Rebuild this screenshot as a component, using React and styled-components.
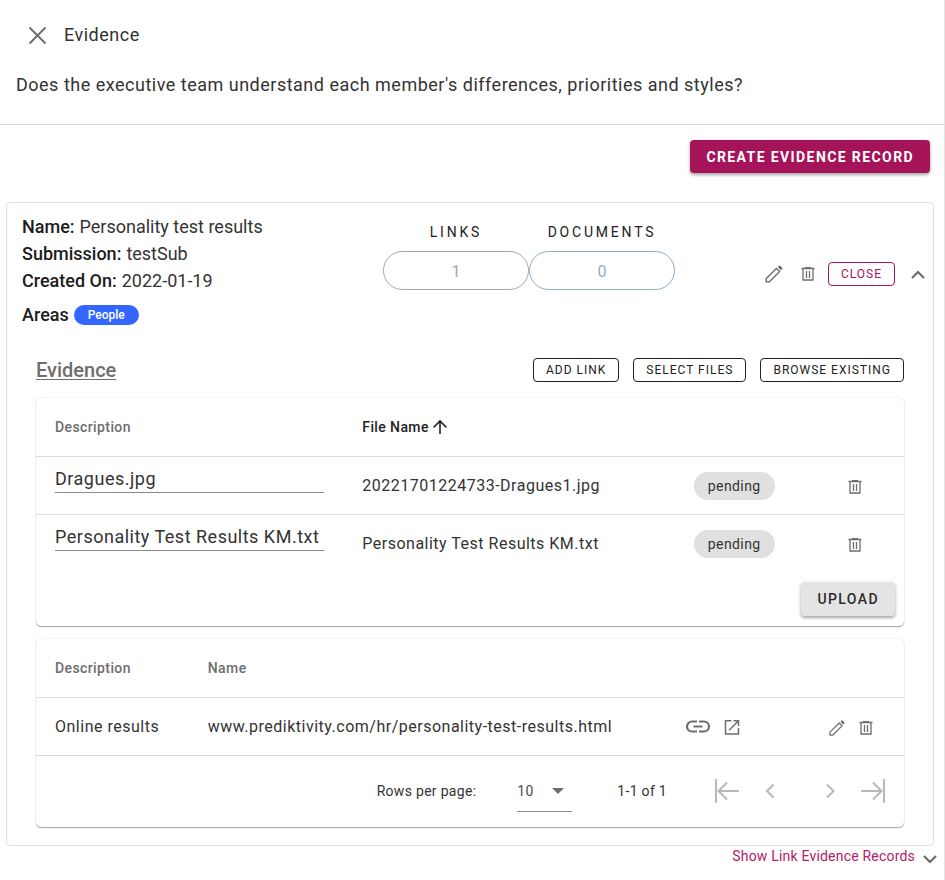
import React, { useState } from "react";
import styled, { createGlobalStyle, css } from "styled-components";

const GlobalStyle = createGlobalStyle`
  *, *::before, *::after { box-sizing: border-box; }
  body {
    margin: 0;
    background: #fff;
    color: #333;
    font-family: Roboto, "Liberation Sans", sans-serif;
    font-size: 16px;
    line-height: 24px;
  }
  button, input, select { font: inherit; color: inherit; letter-spacing: inherit; }
`;

/* ---------- icons ---------- */

const Svg = styled.svg`
  display: block;
  width: ${(p) => p.$size || 20}px;
  height: ${(p) => p.$size || 20}px;
  flex: none;
  fill: none;
  stroke: currentColor;
  stroke-width: ${(p) => p.$stroke || 1.5};
`;

const CloseIcon = () => (
  <Svg $size={24} $stroke={2} viewBox="0 0 24 24" aria-hidden="true">
    <path d="M4.5 4.5l16 16M20.5 4.5l-16 16" />
  </Svg>
);

const PencilIcon = ({ size }) => (
  <Svg $size={size} $stroke={1.4} viewBox="0 0 20 20" aria-hidden="true">
    <path d="M2.2 17.8v-3.2L12.4 4.4l3.2 3.2L5.4 17.8z" />
    <path d="M13.8 3l1.2-1.2q.6-.6 1.2 0l2 2q.6.6 0 1.2L17 6.2z" fill="currentColor" stroke="none" />
  </Svg>
);

const TrashIcon = ({ size }) => (
  <Svg $size={size} $stroke={1.3} viewBox="0 0 18 18" aria-hidden="true">
    <path d="M2.5 3.5h13M6 2.7h6M4 3.5v11.5h10V3.5M7.5 6v7M10.5 6v7" />
  </Svg>
);

const ChevronIcon = ({ down }) => (
  <Svg $size={24} $stroke={2.2} viewBox="0 0 24 24" aria-hidden="true">
    <path d={down ? "M6 10l6 6 6-6" : "M6 16l6-6 6 6"} />
  </Svg>
);

const ArrowUpIcon = () => (
  <Svg $size={16} $stroke={1.6} viewBox="0 0 16 16" aria-hidden="true">
    <path d="M8 15V2M1.5 8.5L8 2l6.5 6.5" />
  </Svg>
);

const LinkIcon = () => (
  <Svg $size={26} $stroke={2.2} viewBox="0 0 26 26" aria-hidden="true">
    <path d="M12 7.5H7a5 5 0 0 0 0 10H12M14 7.5h5a5 5 0 0 1 0 10H14M8.5 12.5h9" />
  </Svg>
);

const OpenIcon = () => (
  <Svg $size={20} $stroke={1.5} viewBox="0 0 20 20" aria-hidden="true">
    <path d="M9.5 3.7H3.5v13.3h13V11M11.5 3.7h5V9M16.5 3.7L7 13.2" />
  </Svg>
);

const PageIcon = ({ kind }) => {
  const paths = {
    first: "M3 2v24M26 14H5M14 5.5L5.5 14l8.5 8.5",
    prev: "M17.5 7.5l-6.5 6.5 6.5 6.5",
    next: "M11 7.5l6.5 6.5-6.5 6.5",
    last: "M25 2v24M2 14h21M14 5.5l8.5 8.5-8.5 8.5",
  };
  return (
    <Svg $size={28} $stroke={2} viewBox="0 0 28 28" aria-hidden="true">
      <path d={paths[kind]} />
    </Svg>
  );
};

const CaretIcon = () => (
  <Svg $size={12} viewBox="0 0 12 12" aria-hidden="true">
    <path d="M0 3h12L6 9z" fill="currentColor" stroke="none" />
  </Svg>
);

/* ---------- layout ---------- */

const Dialog = styled.main`
  border-right: 1px solid #e4e4e4;
  min-height: 100vh;
`;

const Header = styled.header`
  padding: 20px 16px 24px;
  border-bottom: 1px solid #dedede;
`;

const TitleBar = styled.div`
  display: flex;
  align-items: center;
  gap: 15px;
  padding-left: 9px;
  height: 30px;
`;

const Title = styled.h1`
  margin: 0;
  font-size: 18px;
  font-weight: 400;
  letter-spacing: 0.5px;
`;

const Question = styled.p`
  margin: 20px 0 0;
  font-size: 18px;
  line-height: 30px;
  letter-spacing: 0.5px;
`;

const IconButton = styled.button`
  display: inline-flex;
  align-items: center;
  justify-content: center;
  padding: 0;
  border: 0;
  background: none;
  color: ${(p) => (p.disabled ? "#b8b8b8" : "#6e6e6e")};
  cursor: ${(p) => (p.disabled ? "default" : "pointer")};
`;

const CreateBar = styled.div`
  display: flex;
  justify-content: flex-end;
  padding: 15px 14px 29px;
`;

const raised = css`
  border: 0;
  box-shadow: 0 2px 3px rgba(0, 0, 0, 0.28), 0 1px 5px rgba(0, 0, 0, 0.12);
`;

const RaisedButton = styled.button`
  ${raised}
  height: ${(p) => (p.$primary ? 33 : 34)}px;
  padding: 0 16px;
  border-radius: 4px;
  background: ${(p) => (p.$primary ? "#a51358" : "#e4e4e4")};
  color: ${(p) => (p.$primary ? "#fff" : "#2b2b2b")};
  font-size: 14px;
  font-weight: ${(p) => (p.$primary ? 700 : 500)};
  letter-spacing: 1.4px;
  text-transform: uppercase;
  cursor: pointer;
`;

const OutlineButton = styled.button`
  height: 24px;
  padding: 0 12px;
  border: 1px solid currentColor;
  border-radius: 4px;
  background: none;
  color: ${(p) => (p.$primary ? "#a51358" : "#222")};
  font-size: 12px;
  line-height: 20px;
  letter-spacing: 1px;
  text-transform: uppercase;
  white-space: nowrap;
  cursor: pointer;
`;

const RecordCard = styled.article`
  margin: 0 10px 0 6px;
  padding-bottom: 18px;
  border: 1px solid #dedede;
  border-radius: 4px;
`;

const Summary = styled.div`
  display: grid;
  grid-template-columns: 361fr 292fr 273fr;
  padding: 10px 0 0;
`;

const Facts = styled.dl`
  margin: 0;
  padding-left: 15px;
`;

const Fact = styled.div`
  display: flex;
  align-items: center;
  gap: 5px;
  height: ${(p) => (p.$tall ? 41 : 27)}px;
`;

const FactLabel = styled.dt`
  font-size: 18px;
  font-weight: 500;
  color: #1c1c1c;
`;

const FactValue = styled.dd`
  margin: 0;
  font-size: 18px;
`;

const AreaChip = styled.span`
  display: block;
  height: 20px;
  padding: 0 14px;
  border-radius: 10px;
  background: #3366ff;
  color: #fff;
  font-size: 12px;
  font-weight: 500;
  line-height: 20px;
`;

const Counters = styled.div`
  display: grid;
  grid-template-columns: 1fr 1fr;
  align-content: start;
  padding: 7px 0 0 15px;
  margin-right: -15px;
`;

const Counter = styled.div`
  display: grid;
  gap: 7px;
  text-align: center;
`;

const CounterLabel = styled.span`
  font-size: 14px;
  letter-spacing: 2.8px;
  color: #222;
`;

const CounterPill = styled.span`
  height: 39px;
  border: 1px solid ${(p) => (p.$blue ? "#8faec2" : "#a6a6a6")};
  border-radius: 20px;
  color: ${(p) => (p.$blue ? "#8faec2" : "#a6a6a6")};
  font-size: 16px;
  line-height: 39px;
`;

const RecordActions = styled.div`
  display: flex;
  align-items: center;
  justify-content: flex-end;
  height: 121px;
  padding-right: 3px;
  gap: 11px;
`;

const EvidenceSection = styled.section`
  padding: 20px 29px 0;
`;

const SectionHead = styled.div`
  display: flex;
  align-items: center;
  justify-content: space-between;
  height: 30px;
  margin-bottom: 13px;
`;

const SectionTitle = styled.h2`
  margin: 0;
  color: #6e6e6e;
  font-size: 20px;
  font-weight: 500;
  text-decoration: underline;
  text-underline-offset: 2px;
  text-decoration-thickness: 1px;
`;

const ButtonRow = styled.div`
  display: flex;
  align-items: center;
  gap: 14px;
`;

const Panel = styled.div`
  border-radius: 5px;
  box-shadow: 0 1px 1px rgba(0, 0, 0, 0.34), 0 0 2px rgba(0, 0, 0, 0.14);
  & + & { margin-top: 13px; }
`;

const Table = styled.table`
  width: 100%;
  table-layout: fixed;
  border-collapse: collapse;
`;

const Col = styled.col`
  width: ${(p) => p.$w};
`;

const HeadCell = styled.th`
  height: 58px;
  padding: 0 19px;
  border-bottom: 1px solid #dedede;
  color: ${(p) => (p.$sorted ? "#222" : "#6e6e6e")};
  font-size: 14px;
  font-weight: 500;
  letter-spacing: 0.4px;
  text-align: left;
`;

const SortLabel = styled.span`
  display: flex;
  align-items: center;
  gap: 3px;
`;

const Cell = styled.td`
  height: 58px;
  padding: 2px 19px 0;
  border-bottom: ${(p) => (p.$last ? "0" : "1px solid #dedede")};
  font-size: 16px;
  letter-spacing: 0.5px;
  white-space: nowrap;
`;

const DescriptionInput = styled.input`
  display: block;
  width: 100%;
  height: 29px;
  margin-bottom: 15px;
  padding: 0;
  border: 0;
  border-bottom: 1px solid #8a8a8a;
  border-radius: 0;
  outline: 0;
  background: none;
  font-size: 18px;
`;

const StatusChip = styled.span`
  display: inline-block;
  height: 28px;
  padding: 0 14px;
  border-radius: 14px;
  background: #e0e0e0;
  font-size: 14px;
  line-height: 28px;
  letter-spacing: 0.4px;
  vertical-align: middle;
`;

const IconRow = styled.div`
  display: flex;
  align-items: center;
  justify-content: ${(p) => (p.$end ? "flex-end" : "flex-start")};
  gap: ${(p) => p.$gap || 10}px;
  padding-top: ${(p) => (p.$end ? 2 : 0)}px;
  padding-right: ${(p) => p.$pad || 0}px;
`;

const UploadBar = styled.div`
  display: flex;
  justify-content: flex-end;
  padding: 10px 9px 10px;
`;

const Pager = styled.nav`
  display: flex;
  align-items: center;
  justify-content: flex-end;
  height: 71px;
  padding-right: 17px;
  font-size: 14px;
  letter-spacing: 0.3px;
`;

const SelectBox = styled.span`
  position: relative;
  display: flex;
  align-items: center;
  width: 55px;
  height: 41px;
  margin: 0 45px 0 41px;
  border-bottom: 1px solid #8a8a8a;
  color: #6e6e6e;
`;

const PageSelect = styled.select`
  width: 100%;
  padding: 0;
  border: 0;
  outline: 0;
  appearance: none;
  background: none;
  color: #4a4a4a;
`;

const CaretSlot = styled.span`
  position: absolute;
  right: 8px;
  pointer-events: none;
`;

const PageButtons = styled.div`
  display: flex;
  gap: 32px;
  margin-left: 46px;
`;

const PageButtonPair = styled.div`
  display: flex;
  gap: 15px;
`;

const Footer = styled.footer`
  display: flex;
  align-items: flex-start;
  justify-content: flex-end;
  gap: 3px;
  padding-right: 2px;
`;

const FooterLink = styled.a`
  color: #b5206a;
  font-size: 14px;
  line-height: 20px;
  letter-spacing: 0.2px;
  text-decoration: none;
`;

const files = [
  { description: "Dragues.jpg", name: "20221701224733-Dragues1.jpg" },
  { description: "Personality Test Results KM.txt", name: "Personality Test Results KM.txt" },
];

export default function App() {
  const [rows, setRows] = useState("10");
  return (
    <>
      <GlobalStyle />
      <Dialog>
        <Header>
          <TitleBar>
            <IconButton type="button" aria-label="Close dialog"><CloseIcon /></IconButton>
            <Title>Evidence</Title>
          </TitleBar>
          <Question>Does the executive team understand each member's differences, priorities and styles?</Question>
        </Header>
        <CreateBar>
          <RaisedButton type="button" $primary>Create evidence record</RaisedButton>
        </CreateBar>
        <RecordCard>
          <Summary>
            <Facts>
              <Fact><FactLabel>Name:</FactLabel><FactValue>Personality test results</FactValue></Fact>
              <Fact><FactLabel>Submission:</FactLabel><FactValue>testSub</FactValue></Fact>
              <Fact><FactLabel>Created On:</FactLabel><FactValue>2022-01-19</FactValue></Fact>
              <Fact $tall><FactLabel>Areas</FactLabel><FactValue><AreaChip>People</AreaChip></FactValue></Fact>
            </Facts>
            <Counters>
              <Counter><CounterLabel>LINKS</CounterLabel><CounterPill>1</CounterPill></Counter>
              <Counter><CounterLabel>DOCUMENTS</CounterLabel><CounterPill $blue>0</CounterPill></Counter>
            </Counters>
            <RecordActions>
              <IconRow $gap={15}>
                <IconButton type="button" aria-label="Edit record"><PencilIcon size={20} /></IconButton>
                <IconButton type="button" aria-label="Delete record"><TrashIcon size={18} /></IconButton>
              </IconRow>
              <OutlineButton type="button" $primary>Close</OutlineButton>
              <IconButton type="button" aria-label="Collapse record"><ChevronIcon /></IconButton>
            </RecordActions>
          </Summary>
          <EvidenceSection>
            <SectionHead>
              <SectionTitle>Evidence</SectionTitle>
              <ButtonRow>
                <OutlineButton type="button">Add link</OutlineButton>
                <OutlineButton type="button">Select files</OutlineButton>
                <OutlineButton type="button">Browse existing</OutlineButton>
              </ButtonRow>
            </SectionHead>
            <Panel>
              <Table>
                <colgroup><Col $w="35.4%" /><Col $w="38.2%" /><Col $w="15%" /><Col /></colgroup>
                <thead>
                  <tr>
                    <HeadCell scope="col">Description</HeadCell>
                    <HeadCell scope="col" $sorted aria-sort="ascending">
                      <SortLabel>File Name<ArrowUpIcon /></SortLabel>
                    </HeadCell>
                    <HeadCell as="td" />
                    <HeadCell as="td" />
                  </tr>
                </thead>
                <tbody>
                  {files.map((f, i) => (
                    <tr key={f.name}>
                      <Cell $last={i === 1}>
                        <DescriptionInput aria-label={`Description of ${f.name}`} defaultValue={f.description} />
                      </Cell>
                      <Cell $last={i === 1}>{f.name}</Cell>
                      <Cell $last={i === 1}><StatusChip>pending</StatusChip></Cell>
                      <Cell $last={i === 1}>
                        <IconRow $end $pad={21}>
                          <IconButton type="button" aria-label={`Delete ${f.name}`}><TrashIcon size={18} /></IconButton>
                        </IconRow>
                      </Cell>
                    </tr>
                  ))}
                </tbody>
              </Table>
              <UploadBar><RaisedButton type="button">Upload</RaisedButton></UploadBar>
            </Panel>
            <Panel>
              <Table>
                <colgroup><Col $w="17.6%" /><Col $w="55%" /><Col $w="13%" /><Col /></colgroup>
                <thead>
                  <tr>
                    <HeadCell scope="col">Description</HeadCell>
                    <HeadCell scope="col">Name</HeadCell>
                    <HeadCell as="td" />
                    <HeadCell as="td" />
                  </tr>
                </thead>
                <tbody>
                  <tr>
                    <Cell>Online results</Cell>
                    <Cell>www.prediktivity.com/hr/personality-test-results.html</Cell>
                    <Cell>
                      <IconRow $gap={11}>
                        <IconButton type="button" aria-label="Copy link"><LinkIcon /></IconButton>
                        <IconButton type="button" aria-label="Open link"><OpenIcon /></IconButton>
                      </IconRow>
                    </Cell>
                    <Cell>
                      <IconRow $end $gap={11} $pad={10}>
                        <IconButton type="button" aria-label="Edit link"><PencilIcon size={18} /></IconButton>
                        <IconButton type="button" aria-label="Delete link"><TrashIcon size={18} /></IconButton>
                      </IconRow>
                    </Cell>
                  </tr>
                </tbody>
              </Table>
              <Pager aria-label="Pagination">
                <label htmlFor="rows">Rows per page:</label>
                <SelectBox>
                  <PageSelect id="rows" value={rows} onChange={(e) => setRows(e.target.value)}>
                    <option>10</option>
                    <option>25</option>
                    <option>50</option>
                  </PageSelect>
                  <CaretSlot><CaretIcon /></CaretSlot>
                </SelectBox>
                <span>1-1 of 1</span>
                <PageButtons>
                  <PageButtonPair>
                    <IconButton type="button" disabled aria-label="First page"><PageIcon kind="first" /></IconButton>
                    <IconButton type="button" disabled aria-label="Previous page"><PageIcon kind="prev" /></IconButton>
                  </PageButtonPair>
                  <PageButtonPair>
                    <IconButton type="button" disabled aria-label="Next page"><PageIcon kind="next" /></IconButton>
                    <IconButton type="button" disabled aria-label="Last page"><PageIcon kind="last" /></IconButton>
                  </PageButtonPair>
                </PageButtons>
              </Pager>
            </Panel>
          </EvidenceSection>
        </RecordCard>
        <Footer>
          <FooterLink href="#records">Show Link Evidence Records</FooterLink>
          <IconButton type="button" aria-label="Expand link evidence records"><ChevronIcon down /></IconButton>
        </Footer>
      </Dialog>
    </>
  );
}
